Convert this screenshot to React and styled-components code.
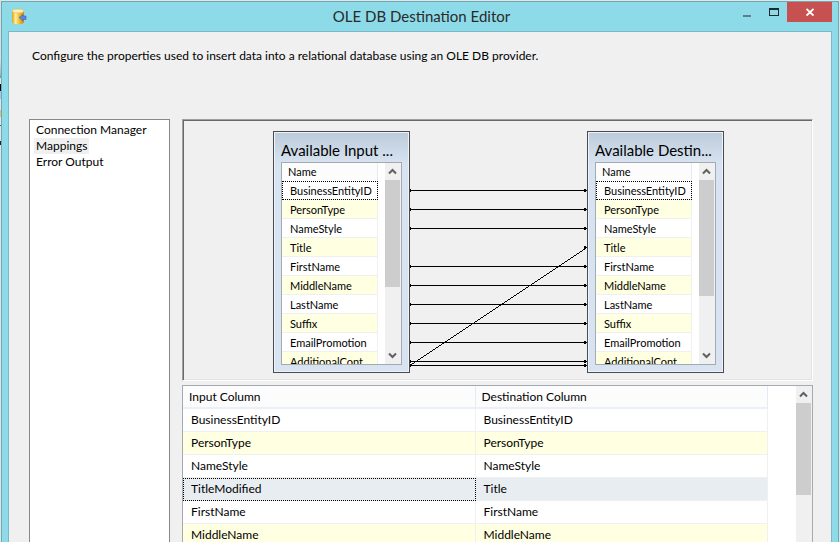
import React from "react";
import styled, { createGlobalStyle } from "styled-components";

const GlobalStyle = createGlobalStyle`
  * {
    box-sizing: border-box;
  }

  body {
    margin: 0;
    background: #e4e4e4;
    font-family: Lato, "Open Sans", sans-serif;
    font-size: 12px;
    line-height: 16px;
    color: #000;
  }

  button {
    border: 0;
    padding: 0;
    background: none;
    font: inherit;
    color: inherit;
  }
`;

const Desktop = styled.div`
  height: 100vh;
  padding: 1px 1px 0;
  display: flex;
  overflow: hidden;
  background: linear-gradient(
      #dcdcdc 0 60px, #b4b4bc 74px, #6da9b5 76px 78px, #e4e4e4 78px 84px,
      #000 84px 91px, #a9c4e4 91px 99px, #e4e4e4 99px 110px, #eebb66 110px 117px,
      #e4e4e4 117px 125px, #555 125px 126px, #e4e4e4 126px 141px, #222 141px 145px, #e4e4e4 145px
    ) left / 1px 100% no-repeat,
    #e4e4e4;
`;

const Window = styled.div`
  flex: 1;
  display: flex;
  flex-direction: column;
  border: 1px solid #6ba9b6;
  border-bottom: 0;
  background: #8ddbe9;
`;

const TitleBar = styled.header`
  display: grid;
  grid-template-columns: 1fr auto 1fr;
  height: 29px;
  padding: 0 6px 0 9px;
`;

const AppIcon = styled.svg`
  margin-top: 6px;
`;

const WindowTitle = styled.h1`
  margin: 0;
  font-size: 15px;
  font-weight: 400;
  line-height: 29px;
  color: #2a2a2a;
`;

const WindowButtons = styled.div`
  display: flex;
  justify-content: flex-end;
`;

const WindowButton = styled.button`
  width: ${({ $close }) => ($close ? 45 : 27)}px;
  height: 20px;
  background: ${({ $close }) => ($close ? "#c75050" : "transparent")};

  svg {
    display: block;
    margin: 0 auto;
  }
`;

const Client = styled.main`
  flex: 1;
  min-height: 0;
  display: flex;
  flex-direction: column;
  margin: 0 6px;
  padding: 16px 18px 0 20px;
  border: 1px solid #7ab8c6;
  border-bottom: 0;
  background: #f0f0f0;
`;

const Description = styled.p`
  margin: 0;
  padding-left: 3px;
  height: 71px;
`;

const Body = styled.div`
  flex: 1;
  min-height: 0;
  display: flex;
  gap: 12px;
`;

const PageList = styled.nav`
  flex: 0 0 141px;
  display: flex;
  flex-direction: column;
  align-items: flex-start;
  padding: 2px 4px;
  border: 1px solid #828790;
  border-bottom: 0;
  background: #fff;
`;

const PageButton = styled.button`
  padding: 0 2px;
  background: ${({ $active }) => ($active ? "#f0f0f0" : "transparent")};
`;

const Mappings = styled.div`
  flex: 1;
  min-width: 0;
  display: flex;
  flex-direction: column;
  gap: 4px;
`;

const Canvas = styled.section`
  display: flex;
  justify-content: center;
  padding: 10px 0 6px 2px;
  border: 1px solid;
  border-color: #a0a0a0 #fff #fff #a0a0a0;
  box-shadow: inset 1px 1px #696969, inset -1px -1px #e3e3e3;
`;

const Card = styled.div`
  width: 137px;
  height: 242px;
  margin: 1px 0;
  display: flex;
  flex-direction: column;
  padding: 5px 7px 7px;
  border: 1px solid #4a4a50;
  box-shadow: inset 0 0 0 1px #eef3f9;
  background: linear-gradient(#bccbda, #d7e3f1 32px);
`;

const CardTitle = styled.h2`
  margin: 0;
  height: 25px;
  white-space: nowrap;
  font-size: 15px;
  font-weight: 400;
  line-height: 27px;
`;

const Scroller = styled.div`
  flex: 1;
  min-height: 0;
  display: flex;
  overflow: hidden;
  border: 1px solid #a5a9b2;
  border-bottom-width: ${({ $open }) => ($open ? 0 : 1)}px;
  background: #fff;
`;

const ScrollContent = styled.div`
  flex: 1;
  min-width: 0;
  padding-right: ${({ $space }) => $space}px;
`;

const ScrollTrack = styled.div`
  flex: 0 0 16px;
  display: flex;
  flex-direction: column;
  padding-right: 1px;
  background: #f0f0f0;
`;

const ScrollButton = styled.button`
  height: 17px;
  margin-top: ${({ $end }) => ($end ? "auto" : 0)};

  svg {
    display: block;
    margin: 0 auto;
  }
`;

const ScrollThumb = styled.div`
  height: ${({ $size }) => $size}px;
  background: #cdcdcd;
`;

const ColumnTable = styled.table`
  width: 100%;
  border-collapse: separate;
  border-spacing: 0;
  table-layout: fixed;
  font-size: 11px;

  th {
    height: 18px;
    padding: 0 6px;
    font-weight: 400;
    text-align: left;
    background: #fcfcfc;
    border-right: 1px solid #e3ebf7;
  }

  td {
    height: 19px;
    padding: 2px 0 0 8px;
    white-space: nowrap;
    overflow: hidden;
    border-right: 1px solid #f0f0f0;
    border-bottom: 1px solid #f0f0f0;
  }

  tbody tr:nth-child(even) {
    background: #ffffe1;
  }

  tbody tr:first-child td {
    outline: 1px dotted #000;
    outline-offset: -1px;
  }
`;

const MappingTable = styled.table`
  width: 100%;
  border-collapse: separate;
  border-spacing: 0;
  table-layout: fixed;

  th {
    height: 23px;
    padding: 0 6px;
    font-weight: 400;
    text-align: left;
    background: #fcfcfc;
    border-right: 1px solid #e3ebf7;
    border-bottom: 2px solid #ebeff6;
  }

  td {
    height: 23px;
    padding: 0 8px;
    border-right: 1px solid #f0f0f0;
    border-bottom: 1px solid #f0f0f0;
  }
`;

const MappingRow = styled.tr`
  &:nth-child(even) {
    background: #ffffe1;
  }

  &&[aria-selected="true"] {
    background: #e8edf2;
  }

  &[aria-selected="true"] td:first-child {
    outline: 1px dotted #000;
    outline-offset: -1px;
  }
`;

const columns = [
  "BusinessEntityID",
  "PersonType",
  "NameStyle",
  "Title",
  "FirstName",
  "MiddleName",
  "LastName",
  "Suffix",
  "EmailPromotion",
  "AdditionalCont",
];

const mappings = [
  ["BusinessEntityID", "BusinessEntityID"],
  ["PersonType", "PersonType"],
  ["NameStyle", "NameStyle"],
  ["TitleModified", "Title"],
  ["FirstName", "FirstName"],
  ["MiddleName", "MiddleName"],
];

// [y on the input side, y on the destination side]
const links = [
  [59, 59],
  [78, 78],
  [97, 97],
  [234, 116],
  [135, 135],
  [154, 154],
  [173, 173],
  [192, 192],
  [211, 211],
  [230, 230],
  [234, 234],
];

function Arrow({ down }) {
  return (
    <svg width="9" height="7" viewBox="0 0 9 7" aria-hidden="true">
      <path
        d={down ? "M1 1.5 4.5 5 8 1.5" : "M1 5.5 4.5 2 8 5.5"}
        fill="none"
        stroke="#606060"
        strokeWidth="2"
      />
    </svg>
  );
}

function ScrollBar({ size }) {
  return (
    <ScrollTrack>
      <ScrollButton aria-label="Scroll up">
        <Arrow />
      </ScrollButton>
      <ScrollThumb $size={size} />
      <ScrollButton aria-label="Scroll down" $end>
        <Arrow down />
      </ScrollButton>
    </ScrollTrack>
  );
}

function ColumnCard({ title, thumb }) {
  return (
    <Card>
      <CardTitle>{title}</CardTitle>
      <Scroller>
        <ScrollContent $space={7}>
          <ColumnTable>
            <thead>
              <tr>
                <th>Name</th>
              </tr>
            </thead>
            <tbody>
              {columns.map((name) => (
                <tr key={name}>
                  <td>{name}</td>
                </tr>
              ))}
            </tbody>
          </ColumnTable>
        </ScrollContent>
        <ScrollBar size={thumb} />
      </Scroller>
    </Card>
  );
}

function Links() {
  return (
    <svg width="177" height="244" viewBox="0 -1 177 244" shapeRendering="crispEdges" aria-hidden="true">
      {links.map(([from, to], i) => (
        <g key={i}>
          <line x1="0" y1={from + 0.5} x2="177" y2={to + 0.5} stroke="#000" />
          <rect x="0" y={from - 1} width="1" height="3" />
          <rect x="174" y={to - 1} width="2" height="3" />
        </g>
      ))}
    </svg>
  );
}

function DatabaseIcon() {
  return (
    <AppIcon width="17" height="18" viewBox="0 0 17 18" aria-hidden="true">
      <defs>
        <linearGradient id="gold">
          <stop offset="0" stopColor="#e0a020" />
          <stop offset="0.3" stopColor="#fff0a0" />
          <stop offset="0.6" stopColor="#f3bd2c" />
          <stop offset="1" stopColor="#cc8710" />
        </linearGradient>
      </defs>
      <path d="M1 3v11c0 3 12 3 12 0V3z" fill="url(#gold)" />
      <ellipse cx="7" cy="3" rx="6" ry="2" fill="#fbf0b8" stroke="#e3b64c" strokeWidth="0.6" />
      <path d="M8 9.500l4-3v1.500h3v3.500h-3v1.500z" fill="#5b86dc" stroke="#3c5fb4" strokeWidth="0.6" />
    </AppIcon>
  );
}

function App() {
  return (
    <Desktop>
      <GlobalStyle />
      <Window>
        <TitleBar>
          <DatabaseIcon />
          <WindowTitle>OLE DB Destination Editor</WindowTitle>
          <WindowButtons>
            <WindowButton aria-label="Minimize">
              <svg width="10" height="16" viewBox="0 0 10 16">
                <path d="M1 11h8v2H1z" fill="#5f7f88" />
              </svg>
            </WindowButton>
            <WindowButton aria-label="Maximize">
              <svg width="10" height="16" viewBox="0 0 10 16">
                <path d="M0 4h10v8H0zM1 6v5h8V6z" fill="#1e2a2d" fillRule="evenodd" />
              </svg>
            </WindowButton>
            <WindowButton aria-label="Close" $close>
              <svg width="8" height="16" viewBox="0 0 8 16">
                <path d="M.5 5l7 6.500M7.500 5l-7 6.500" stroke="#fff" strokeWidth="1.800" />
              </svg>
            </WindowButton>
          </WindowButtons>
        </TitleBar>
        <Client>
          <Description>
            Configure the properties used to insert data into a relational database using an OLE DB provider.
          </Description>
          <Body>
            <PageList>
              <PageButton>Connection Manager</PageButton>
              <PageButton $active>Mappings</PageButton>
              <PageButton>Error Output</PageButton>
            </PageList>
            <Mappings>
              <Canvas>
                <ColumnCard title="Available Input ..." thumb={107} />
                <Links />
                <ColumnCard title="Available Destin..." thumb={116} />
              </Canvas>
              <Scroller $open>
                <ScrollContent $space={28}>
                  <MappingTable>
                    <thead>
                      <tr>
                        <th>Input Column</th>
                        <th>Destination Column</th>
                      </tr>
                    </thead>
                    <tbody>
                      {mappings.map(([input, destination]) => (
                        <MappingRow key={input} aria-selected={input === "TitleModified"}>
                          <td>{input}</td>
                          <td>{destination}</td>
                        </MappingRow>
                      ))}
                    </tbody>
                  </MappingTable>
                </ScrollContent>
                <ScrollTrack>
                  <ScrollButton aria-label="Scroll up">
                    <Arrow />
                  </ScrollButton>
                  <ScrollThumb $size={92} />
                </ScrollTrack>
              </Scroller>
            </Mappings>
          </Body>
        </Client>
      </Window>
    </Desktop>
  );
}

export default App;
